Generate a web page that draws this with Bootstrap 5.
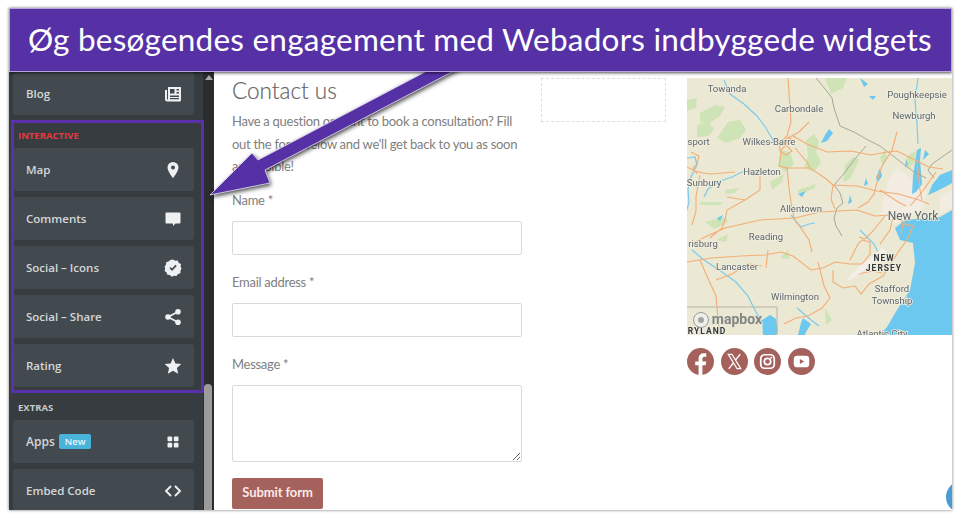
<!DOCTYPE html>
<html lang="da">
<head>
  <meta charset="UTF-8" />
  <title>Webador widgets</title>
  <meta name="viewport" content="width=device-width, initial-scale=1.0"/>
  <link href="https://cdn.jsdelivr.net/npm/bootstrap@5.3.3/dist/css/bootstrap.min.css" rel="stylesheet">
  <style>
    html, body { height: 100%; overflow: hidden; background: #fff; }
    body { font-family: "Lato", "Liberation Sans", sans-serif; }
    .shot {
      position: relative;
      width: 943px;
      height: 502px;
      margin: 8px 0 0 9px;
      overflow: hidden;
      box-shadow: 0 0 3px rgba(0,0,0,.55);
    }
    .banner {
      position: relative;
      z-index: 3;
      height: 64px;
      background: #5631a6;
      color: #fff;
      font-size: 31.5px;
      line-height: 62px;
      letter-spacing: .23px;
      padding-left: 19px;
      white-space: nowrap;
      box-shadow: 0 1px 3px rgba(0,0,0,.7), inset 0 0 0 1px #b5a5d8;
    }
    .stage { height: 438px; }
    .side { width: 205px; flex: none; background: #2b2c2d; overflow: hidden; }
    .side-panel { width: 194px; flex: none; height: 100%; background: #363c3f; padding-left: 4px; }
    .side-scroll { width: 11px; flex: none; position: relative; }
    .side-scroll::before {
      content: "";
      position: absolute;
      left: 2px; top: 3px;
      border: 4px solid transparent;
      border-top: 0;
      border-bottom: 5px solid #a9a9a9;
    }
    .side-thumb { position: absolute; left: 1px; right: 2px; top: 312px; bottom: 0; background: #9b9b9b; border-radius: 4px 4px 0 0; }
    .side-item {
      width: 181px;
      height: 43px;
      margin-bottom: 6px;
      padding: 0 12px 0 13px;
      background: #434a4f;
      border-radius: 3px;
      color: #d3d7d9;
      font-family: "Open Sans", "Liberation Sans", sans-serif;
      font-size: 11.5px;
      font-weight: 600;
    }
    .side-item svg { width: 18px; height: 18px; fill: #eef0f1; flex: none; }
    .side-head {
      font-family: "Open Sans", "Liberation Sans", sans-serif;
      font-size: 9.5px;
      font-weight: 700;
      color: #c6cacc;
      line-height: 12px;
      padding-left: 5px;
      margin-bottom: 6px;
    }
    .side-box {
      position: relative;
      margin-top: -1px;
      height: 273px;
      padding-top: 10px;
      margin-left: -2px;
      padding-left: 2px;
      width: 193px;
      margin-bottom: 9px;
    }
    .side-box .side-head { color: #e8383f; margin-bottom: 6px; }
    .side-box::after {
      content: "";
      position: absolute;
      inset: 0;
      border: 3px solid #5a30ad;
      pointer-events: none;
    }
    .apps-name { font-size: 12px; }
    .new-tag {
      background: #4ab3dc;
      color: #eaf7fc;
      font-size: 9.5px;
      line-height: 15px;
      padding: 0 6px;
      border-radius: 2px;
      margin-left: 4px;
    }
    .page-area { flex: 1; background: #fff; padding: 5px 0 0 18px; min-width: 0; }
    .form-col { width: 290px; flex: none; color: #808080; font-size: 13px; letter-spacing: -.28px; }
    .form-col h2 {
      font-family: "Lato", sans-serif;
      font-size: 22.5px;
      font-weight: 300;
      line-height: 26px;
      letter-spacing: 0;
      color: #666;
      margin: 1px 0 6px;
      -webkit-text-stroke: .2px #666;
    }
    .form-col p { line-height: 22.5px; margin: 0 0 14px; }
    .form-col label { display: block; line-height: 16px; margin-bottom: 13px; }
    .form-col .form-control {
      height: 34px;
      margin-bottom: 19px;
      border: 1px solid #d9d9d9;
      border-radius: 2px;
    }
    .form-col textarea.form-control { height: 77px; margin-bottom: 16px; }
    .send-btn {
      width: 91px;
      height: 31px;
      padding: 0;
      background: #a5615c;
      border: 0;
      border-radius: 2px;
      color: #fae9e7;
      font-size: 13px;
      font-weight: 700;
      letter-spacing: -.1px;
    }
    .empty-box { width: 125px; height: 44px; margin: 1px 21px 0 19px; border: 1px dashed #dedede; flex: none; }
    .map-col { width: 265px; flex: none; margin-top: 1px; }
    .map-col .map-pic { display: block; width: 265px; height: 257px; filter: blur(.35px); }
    .map-pic text { font-family: "Roboto", "Liberation Sans", sans-serif; fill: #5d6468; font-size: 9.5px; text-anchor: middle; stroke: #f1efe2; stroke-width: 1.6px; paint-order: stroke; }
    .social-row { gap: 6.5px; margin-top: 13px; }
    .social-row svg { width: 27px; height: 27px; }
    .help-dot { position: absolute; z-index: 1; right: -26px; bottom: -3px; width: 32px; height: 32px; border-radius: 50%; background: #459cd6; }
    .pointer { position: absolute; z-index: 2; left: 0; top: 0; width: 943px; height: 502px; pointer-events: none; filter: drop-shadow(1px 2px 2px rgba(0,0,0,.7)); }
  </style>
</head>
<body>

<div class="shot">
  <div class="banner">Øg besøgendes engagement med Webadors indbyggede widgets</div>

  <div class="stage d-flex">
    <!-- editor sidebar -->
    <div class="side d-flex">
      <div class="side-panel">
        <div class="side-item d-flex align-items-center justify-content-between">
          <span>Blog</span>
          <svg viewBox="0 0 18 18"><path fill-rule="evenodd" d="M4 2h13v13a1.500 1.500 0 0 1-1.500 1.500h-12A2.500 2.500 0 0 1 1 14V5h2v9a.7.7 0 0 0 1 .5zM6 4v4.500h4.500V4zm6.500 0v1.500H15V4zm0 3v1.500H15V7zM6 10.500V12h9v-1.500zM6 13v1.300h9V13z"/></svg>
        </div>

        <div class="side-box">
          <div class="side-head">INTERACTIVE</div>
          <div class="side-item d-flex align-items-center justify-content-between">
            <span>Map</span>
            <svg viewBox="0 0 18 18"><path fill-rule="evenodd" d="M9 1a5.500 5.500 0 0 0-5.500 5.500C3.500 10.500 9 17 9 17s5.500-6.500 5.500-10.500A5.500 5.500 0 0 0 9 1zm0 3.500a2 2 0 1 1 0 4 2 2 0 0 1 0-4z"/></svg>
          </div>
          <div class="side-item d-flex align-items-center justify-content-between">
            <span>Comments</span>
            <svg viewBox="0 0 18 18"><path d="M2.500 2.500h13a1 1 0 0 1 1 1v9a1 1 0 0 1-1 1h-4l-2.500 2.500v-2.500h-6.500a1 1 0 0 1-1-1v-9a1 1 0 0 1 1-1z"/></svg>
          </div>
          <div class="side-item d-flex align-items-center justify-content-between">
            <span>Social – Icons</span>
            <svg viewBox="0 0 18 18"><path fill-rule="evenodd" d="M9 .5l2.200 1.300 2.500-.2 1.100 2.300 2.200 1.200-.4 2.500L17.500 9.500l-1 2.300-.1 2.500-2.400.8-1.500 2-2.500-.4-2.300 1-1.900-1.700-2.500-.2-.7-2.400-2-1.500.6-2.500L.5 7.800l1.500-2 .2-2.500 2.400-.7L6.300 1zM5.500 9.200l2.600 2.700 4.600-5-1.200-1.100-3.400 3.700-1.500-1.500z"/></svg>
          </div>
          <div class="side-item d-flex align-items-center justify-content-between">
            <span>Social – Share</span>
            <svg viewBox="0 0 18 18"><circle cx="14" cy="3.800" r="2.800"/><circle cx="14" cy="14.200" r="2.800"/><circle cx="4" cy="9" r="2.800"/><path d="M4 9l10-5.200M4 9l10 5.200" stroke="#eef0f1" stroke-width="1.800" fill="none"/></svg>
          </div>
          <div class="side-item d-flex align-items-center justify-content-between">
            <span>Rating</span>
            <svg viewBox="0 0 18 18"><path d="M9 1l2.400 5.400 5.900.6-4.400 3.900 1.300 5.800L9 13.700l-5.200 3 1.300-5.800L.7 7l5.900-.6z"/></svg>
          </div>
        </div>

        <div class="side-head">EXTRAS</div>
        <div class="side-item d-flex align-items-center justify-content-between">
          <span class="d-flex align-items-center"><span class="apps-name">Apps</span><span class="new-tag">New</span></span>
          <svg viewBox="0 0 18 18"><rect x="3.500" y="3.500" width="4.700" height="4.700" rx="1"/><rect x="9.800" y="3.500" width="4.700" height="4.700" rx="1"/><rect x="3.500" y="9.800" width="4.700" height="4.700" rx="1"/><rect x="9.800" y="9.800" width="4.700" height="4.700" rx="1"/></svg>
        </div>
        <div class="side-item d-flex align-items-center justify-content-between">
          <span>Embed Code</span>
          <svg viewBox="0 0 18 18"><path d="M7 4L2 9l5 5M11 4l5 5-5 5" fill="none" stroke="#eef0f1" stroke-width="1.900"/></svg>
        </div>
      </div>
      <div class="side-scroll"><div class="side-thumb"></div></div>
    </div>

    <!-- page preview -->
    <div class="page-area d-flex align-items-start">
      <form class="form-col">
        <h2>Contact us</h2>
        <p>Have a question or want to book a consultation? Fill out the form below and we'll get back to you as soon as possible!</p>
        <label for="fName">Name *</label>
        <input id="fName" type="text" class="form-control">
        <label for="fMail">Email address *</label>
        <input id="fMail" type="text" class="form-control">
        <label for="fMsg">Message *</label>
        <textarea id="fMsg" class="form-control"></textarea>
        <button type="button" class="btn send-btn">Submit form</button>
      </form>

      <div class="empty-box"></div>

      <div class="map-col">
        <svg class="map-pic" viewBox="687 78 265 257">
          <rect x="687" y="78" width="265" height="257" fill="#ebe8d3"/>
          <!-- woods -->
          <g fill="#cfe4b6">
            <path d="M700 113l15-8 10 2-5 9-12 8-8-2zM687 100l10-2-1 10-9 3zM697 125l12-3 5 7-5 7-12 1zM728 122l12-2 6 10-6 8-14 5-9-5zM780 150l10 2 4 12-9 8-6-6zM806 140l8-6 5 8-3 10 5 10-7 10-10-4 4-12zM825 78l22 0-4 10-12 6z"/>
            <path d="M845 165l8-8 6 2-4 10-5 10-7 3zM905 160l6-7 6-2-3 12-6 6zM880 158l5-8 2 8-4 8zM770 182l14-8-2 8-10 8zM725 190l14-2-4 5-10 1zM798 190l18-6-2 5-16 5zM700 202l22 0-2 3-20 0zM705 222l18-5 6 4-14 8zM716 240l12-6-2 8zM825 308l7 12-6 5zM780 258l8-8 1 9zM908 312l8-6-12 14-3-3z"/>
          </g>
          <path fill="#f2ece2" d="M897 168l30 22 -4 18-12 10-18 6-12-8 4-24 4-14zM940 196l12-6v18l-12 6z"/>
          <!-- sea -->
          <path fill="#6cc8ee" d="M952 210l-12 7-35 3-10 8 5 12 13 3 2 20-5 27-13 20-10 17-7 8h72z"/>
          <path fill="#6cc8ee" d="M952 170l-12 5-8 10-4 10 7-3 10-5 7-4z"/>
          <!-- rivers and lakes -->
          <g fill="none" stroke="#7ccbec" stroke-width="1.200">
            <path d="M724 80l6 14 14 10 13 12 9 12 8 14M687 158l8-1 2 8-6 12-3 12 1 14-4 12M760 172l-18 0-10 5-12 4-12 8-4 8"/>
            <path d="M918 78l-3 22 2 24 1 20"/>
            <path d="M692 250l12 10 18 12 14 10 12 14 8 16 6 10M797 308l14 12 8 6M860 230l14 14 6 12M791 215l6 8 4 4 8-3 6-1"/>
          </g>
          <path fill="#6cc8ee" d="M825 135l4-6 4 4-6 8-6 2zM917 150l4-2-1 12 2 24-6 8-4 2 1-18zM762 320l8-5 6 4 2 12-2 4-13 0zM803 318l8 6-5 8-1 3h-7l3-12zM860 78l8 6-4 3zM876 96l-3 4-4-4zM850 195l2 7-4 2zM866 178l2 6-4 2zM717 218l6-3-3 6zM798 194l8-3-4 6zM880 168l2 8-4 6-2-4zM925 150l4 4-6 6zM906 160l2 4-3 4z"/>
          <!-- state lines -->
          <g fill="none" stroke="#a7a69b" stroke-width="1">
            <path d="M816 78l10 12 6 8 2 10 6 18 14 6 14 8 12 6 34 26 12 6"/>
            <path d="M866 146l-12 14-12 16-8 9 6 8 3 10-6 5-3 10 2 8 6 10"/>
            <path d="M952 150l-20 14-4 6 6 8"/>
            <path d="M687 307h90v28" stroke="#b5b4a8"/>
          </g>
          <!-- roads -->
          <g fill="none" stroke="#f4ad74" stroke-width="1.100">
            <path d="M788 78l2 30 1 14-4 14-8 8 2 10-2 12 8 2 2 20 3 20 2 10 15 22 3 12"/>
            <path d="M687 167l8 4 8 2 8 1 24-2M691 152l8 4-2 8-4 4 4 6"/>
            <path d="M785 168h25l15 10 8 7 24 1 20 5 22 3 20 6 10 4M793 136l14 8 20 8 24-1 20 4 16-3 10-1 16 8 16 8 14 2"/>
            <path d="M809 122l-10 10-11 6-2 6M795 148l12 14 3 6M760 175v15l-15 10-18 10-2 10-3 8-12 10M795 218l-35 2-35 8-20 9-10 5"/>
            <path d="M795 218l25-6 37-2 18 6 14-1 10 4 6 4M833 185l-2 14 4 10M700 175l-2 10-2 12 0 14-4 14M745 200l-18-3M885 216l-12 15-8 8-6-2"/>
            <path d="M687 262l24-4 30-2 24-1 16-3 12 4 18 14 12-2 12-6 14 2 18 0M700 260l6 14 10 22 2 22 2 17M716 280l16-6 12-8 6-2 12 2M768 250l-2 18"/>
            <path d="M818 262l6 24 6 12-8 10-14 8-12 2-12 6M833 270l0 12 10 6 12-2 6 8 8-10 14-8 10-16 8-12 6-8 6-14 -10-2 -2 10M850 260l8-16 4-4 8 2 0 12-8 10M854 275l18-4 10 2"/>
            <path d="M897 132l-5 18-10 16-4 12-4 16-6 8-10 6M880 190l18 12 8 4M917 160l3 30 2 10M936 172l-14 20-12 14M894 212l-4 18-10 14"/>
            <path d="M786 145l6 6-6 4-6-4zM782 140l8-2 4 4"/>
          </g>
          <path d="M850 280l24-16 14-12-6-4-22 18-14 14z" fill="#f4efe8"/>
          <g>
            <text x="727" y="92">Towanda</text>
            <text x="799" y="112">Carbondale</text>
            <text x="917" y="98">Poughkeepsie</text>
            <text x="914" y="119">Newburgh</text>
            <text x="696" y="145">nsport</text>
            <text x="769" y="145">Wilkes-Barre</text>
            <text x="762" y="175">Hazleton</text>
            <text x="704" y="186">Sunbury</text>
            <text x="801" y="212">Allentown</text>
            <text x="913" y="220" style="font-size:12px">New York</text>
            <text x="766" y="240">Reading</text>
            <text x="703" y="247">risburg</text>
            <text x="737" y="270">Lancaster</text>
            <text x="795" y="300">Wilmington</text>
            <text x="884" y="261" style="font-size:8.500px;font-weight:700;letter-spacing:1px;fill:#33383b">NEW</text>
            <text x="884" y="271" style="font-size:8.500px;font-weight:700;letter-spacing:1px;fill:#33383b">JERSEY</text>
            <text x="892" y="292">Stafford</text>
            <text x="892" y="304">Township</text>
            <text x="707" y="334" style="font-size:8.500px;font-weight:700;letter-spacing:1px;fill:#33383b">RYLAND</text>
            <text x="882" y="337">Atlantic City</text>
            <text x="737" y="324" style="font-size:14px;font-weight:700;fill:#85877f;stroke:#e6e6dc">mapbox</text>
          </g>
          <circle cx="701" cy="320" r="7.500" fill="#eeeeea" stroke="#9b9b95"/>
          <circle cx="701" cy="320" r="3" fill="#a3a49e"/>
        </svg>

        <div class="social-row d-flex">
          <svg viewBox="0 0 28 28"><circle cx="14" cy="14" r="14" fill="#a5615c"/><path fill="#fff" d="M12 28V18H8.500v-4H12v-3c0-3.500 2-5.500 5.200-5.500 1.500 0 2.800.2 2.800.2v3.400h-1.700c-1.700 0-2.300 1-2.300 2.100V14h3.900l-.6 4H16v10z"/></svg>
          <svg viewBox="0 0 28 28"><circle cx="14" cy="14" r="14" fill="#a5615c"/><path fill="none" stroke="#fff" stroke-width="1.300" d="M7.500 6.500h3.800l9.200 15h-3.800zM20 6.500l-5.200 6.200M13 15.300L8 21.500"/></svg>
          <svg viewBox="0 0 28 28"><circle cx="14" cy="14" r="14" fill="#a5615c"/><rect x="7" y="7" width="14" height="14" rx="4" fill="none" stroke="#fff" stroke-width="1.800"/><circle cx="14" cy="14" r="3.300" fill="none" stroke="#fff" stroke-width="1.800"/><circle cx="18" cy="10" r="1" fill="#fff"/></svg>
          <svg viewBox="0 0 28 28"><circle cx="14" cy="14" r="14" fill="#a5615c"/><rect x="6" y="8" width="16" height="12" rx="3.500" fill="#fff"/><path fill="#a5615c" d="M12.300 11.300v5.400l4.500-2.700z"/></svg>
        </div>
      </div>
    </div>
  </div>

  <div class="help-dot"></div>

  <!-- annotation arrow -->
  <svg class="pointer" viewBox="0 0 943 502">
    <path fill="#5631a6" stroke="#e9e4f4" stroke-width=".8" d="M423.500 60L249 152 243 145 201 187 261 175 256 162 450.500 60z"/>
  </svg>
</div>

<script src="https://cdn.jsdelivr.net/npm/bootstrap@5.3.3/dist/js/bootstrap.bundle.min.js"></script>
</body>
</html>
